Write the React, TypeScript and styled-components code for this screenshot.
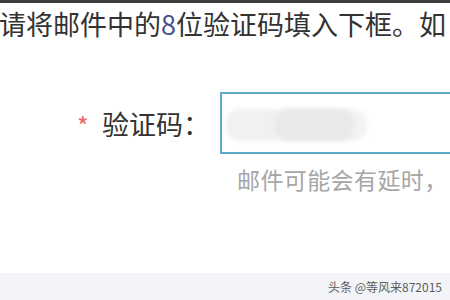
import React from "react";
import styled, { createGlobalStyle } from "styled-components";

const GlobalStyle = createGlobalStyle`
  html, body {
    margin: 0;
    padding: 0;
    background: #ffffff;
  }
  body {
    font-family: "Noto Sans CJK SC", "Noto Sans", sans-serif;
  }
`;

const Page = styled.div`
  width: 450px;
  height: 300px;
  overflow: hidden;
  display: flex;
  flex-direction: column;
  background: #ffffff;
`;

const TopBar = styled.div`
  height: 3px;
  background: #3d3d3d;
  flex-shrink: 0;
`;

const Intro = styled.div`
  margin-top: 3px;
  margin-left: -1px;
  font-size: 27px;
  line-height: 36px;
  color: #333333;
  white-space: nowrap;
`;

const Digit = styled.span`
  color: #4a4f8c;
`;

const FormRow = styled.div`
  display: flex;
  align-items: center;
  margin-top: 50px;
  padding-left: 77px;
  white-space: nowrap;
`;

const Star = styled.span`
  flex-shrink: 0;
  color: #f36464;
  font-size: 25px;
  line-height: 1;
  width: 25px;
  margin-top: 4px;
`;

const Label = styled.label`
  flex-shrink: 0;
  font-size: 27px;
  color: #333333;
  width: 118px;
`;

const InputBox = styled.div`
  box-sizing: border-box;
  width: 260px;
  height: 62px;
  flex-shrink: 0;
  border: 2px solid #5ea9c9;
  position: relative;
  background: #ffffff;
`;

const Smudge = styled.div<{ $left: number; $width: number; $shade: string }>`
  position: absolute;
  top: 15px;
  height: 32px;
  left: ${(p) => p.$left}px;
  width: ${(p) => p.$width}px;
  background: ${(p) => p.$shade};
  border-radius: 14px;
  filter: blur(2px);
`;

const Hint = styled.div`
  margin-top: 8px;
  padding-left: 237px;
  font-size: 23px;
  letter-spacing: 0.4px;
  color: #a6a6a6;
  white-space: nowrap;
`;

const Footer = styled.div`
  margin-top: auto;
  height: 27px;
  background: #f2f4f7;
  display: flex;
  align-items: center;
  justify-content: flex-end;
  padding-right: 8px;
`;

const Watermark = styled.span`
  font-size: 12px;
  color: #5a5a5a;
  text-shadow: 0 0 1px #ffffff;
  font-family: "Noto Sans CJK SC", "Noto Sans", sans-serif;
`;

const App: React.FC = () => {
  return (
    <Page>
      <GlobalStyle />
      <TopBar />
      <Intro>
        请将邮件中的<Digit>8</Digit>位验证码填入下框。如
      </Intro>
      <FormRow>
        <Star>*</Star>
        <Label>验证码：</Label>
        <InputBox>
          <Smudge $left={4} $width={60} $shade="#f1f1f1" />
          <Smudge $left={50} $width={95} $shade="#f3f3f3" />
          <Smudge $left={52} $width={80} $shade="#e9e9e9" />
        </InputBox>
      </FormRow>
      <Hint>邮件可能会有延时，</Hint>
      <Footer>
        <Watermark>头条 @等风来872015</Watermark>
      </Footer>
    </Page>
  );
};

export default App;
